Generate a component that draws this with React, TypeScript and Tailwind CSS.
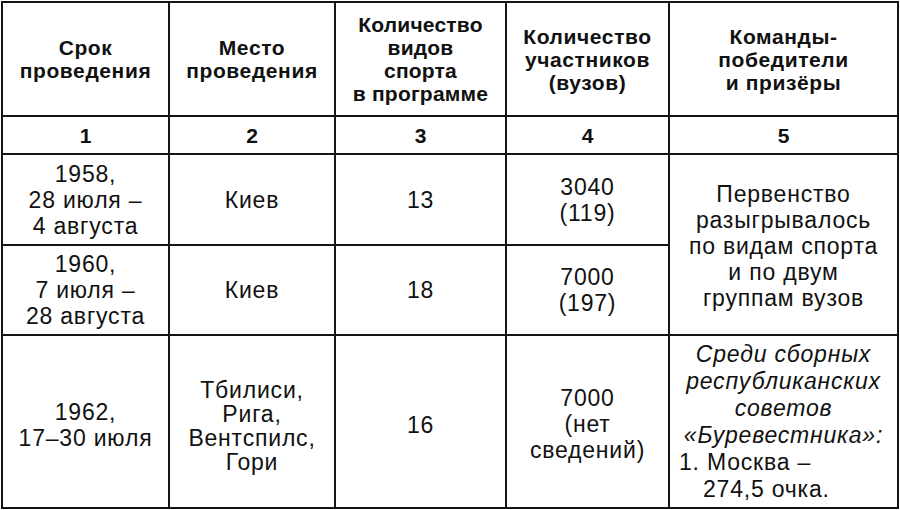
import React from 'react';

const font = { fontFamily: '"Liberation Sans", Arial, sans-serif' };

const cell = 'border-2 border-[#151515] text-center align-middle p-0';

export default function App() {
  return (
    <div className="w-[900px] h-[510px] bg-white text-[#111] overflow-hidden" style={font}>
      <table className="border-collapse table-fixed w-[897px] mt-[1px] ml-[1px]">
        <colgroup>
          <col className="w-[167px]" />
          <col className="w-[166px]" />
          <col className="w-[171px]" />
          <col className="w-[163px]" />
          <col className="w-[229px]" />
        </colgroup>
        <tbody>
          <tr className="h-[114px] font-bold text-[21px] leading-[23px] tracking-[0.6px]">
            <td className={cell}>
              Срок
              <br />
              проведения
            </td>
            <td className={cell}>
              Место
              <br />
              проведения
            </td>
            <td className={cell + ' tracking-[0.2px]'}>
              Количество
              <br />
              видов
              <br />
              спорта
              <br />в программе
            </td>
            <td className={cell}>
              Количество
              <br />
              участников
              <br />
              (вузов)
            </td>
            <td className={cell}>
              Команды-
              <br />
              победители
              <br />и призёры
            </td>
          </tr>
          <tr className="h-[38px] font-bold text-[21px] leading-[23px]">
            <td className={cell}>1</td>
            <td className={cell}>2</td>
            <td className={cell}>3</td>
            <td className={cell}>4</td>
            <td className={cell}>5</td>
          </tr>
          <tr className="h-[91px] text-[23px] leading-[26px] tracking-[0.8px]">
            <td className={cell}>
              1958,
              <br />
              28 июля –
              <br />4 августа
            </td>
            <td className={cell}>Киев</td>
            <td className={cell}>13</td>
            <td className={cell}>
              3040
              <br />
              (119)
            </td>
            <td className={cell} rowSpan={2}>
              <div className="pt-[2px]">
                Первенство
                <br />
                разыгрывалось
                <br />
                по видам спорта
                <br />и по двум
                <br />
                группам вузов
              </div>
            </td>
          </tr>
          <tr className="h-[90px] text-[23px] leading-[26px] tracking-[0.8px]">
            <td className={cell}>
              1960,
              <br />7 июля –
              <br />
              28 августа
            </td>
            <td className={cell}>Киев</td>
            <td className={cell}>18</td>
            <td className={cell}>
              7000
              <br />
              (197)
            </td>
          </tr>
          <tr className="h-[173px] text-[23px] leading-[26px] tracking-[0.8px]">
            <td className={cell}>
              <div className="pt-[6px]">
                1962,
                <br />
                17–30 июля
              </div>
            </td>
            <td className={cell}>
              <div className="leading-[24px] pt-[8px]">
                Тбилиси,
                <br />
                Рига,
                <br />
                Вентспилс,
                <br />
                Гори
              </div>
            </td>
            <td className={cell}>
              <div className="pt-[6px]">16</div>
            </td>
            <td className={cell}>
              <div className="pt-[4px]">
                7000
                <br />
                (нет
                <br />
                сведений)
              </div>
            </td>
            <td className={cell + ' leading-[27px]'}>
              <div className="italic">
                Среди сборных
                <br />
                республиканских
                <br />
                советов
                <br />
                «Буревестника»:
              </div>
              <div className="text-left pl-[9px]">1. Москва –</div>
              <div className="text-left pl-[33px]">274,5 очка.</div>
            </td>
          </tr>
        </tbody>
      </table>
    </div>
  );
}
